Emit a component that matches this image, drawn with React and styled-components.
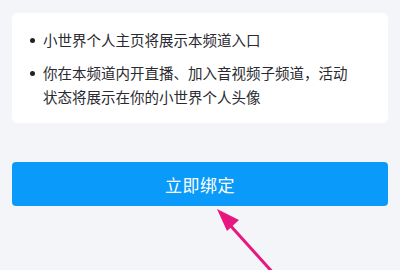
import React from "react";
import styled, { createGlobalStyle } from "styled-components";

const Global = createGlobalStyle`
  html, body { margin: 0; padding: 0; background: #f4f5f9; }
  body { font-family: "Noto Sans CJK SC", "Noto Sans", sans-serif; }
`;

const Page = styled.div`
  position: relative;
  width: 400px;
  height: 270px;
  overflow: hidden;
  background: #f4f5f9;
  padding: 13px 12px 0;
  box-sizing: border-box;
  display: flex;
  flex-direction: column;
`;

const Card = styled.div`
  background: #ffffff;
  border-radius: 5px;
  padding: 15px 14px 14px 18px;
  display: flex;
  flex-direction: column;
  gap: 9px;
`;

const Item = styled.div`
  display: flex;
  align-items: flex-start;
  gap: 8px;
  font-size: 14.5px;
  line-height: 24px;
  color: #2a2a30;
`;

const Dot = styled.span`
  flex: none;
  width: 5px;
  height: 5px;
  border-radius: 50%;
  background: #222;
  margin-top: 10px;
`;

const Button = styled.button`
  margin-top: 39px;
  height: 44px;
  border: none;
  border-radius: 4px;
  background: #0a9bfa;
  color: #fff;
  font-family: inherit;
  font-size: 17px;
  letter-spacing: 0.5px;
`;

const Arrow = styled.svg`
  position: absolute;
  left: 0;
  top: 0;
  pointer-events: none;
`;

export default function App() {
  return (
    <>
      <Global />
      <Page>
        <Card>
          <Item>
            <Dot />
            <span>小世界个人主页将展示本频道入口</span>
          </Item>
          <Item>
            <Dot />
            <span>
              你在本频道内开直播、加入音视频子频道，活动
              <br />
              状态将展示在你的小世界个人头像
            </span>
          </Item>
        </Card>
        <Button>立即绑定</Button>
        <Arrow width="400" height="270" viewBox="0 0 400 270">
          <line x1="229" y1="224" x2="275" y2="275" stroke="#e8167f" strokeWidth="3" />
          <polygon points="217,209 239,220 227,231" fill="#e8167f" />
        </Arrow>
      </Page>
    </>
  );
}
